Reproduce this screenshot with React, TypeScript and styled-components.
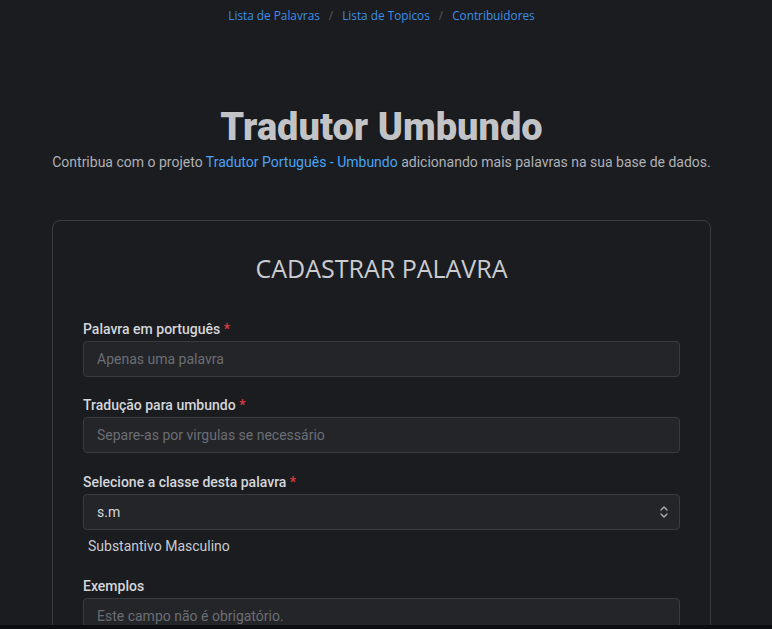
import React from "react";
import styled, { createGlobalStyle } from "styled-components";

const Global = createGlobalStyle`
  html, body { margin: 0; padding: 0; background: #0c0d10; }
  body { font-family: Roboto, "Liberation Sans", sans-serif; }
  * { box-sizing: border-box; }
`;

const Root = styled.div`
  height: 625px;
  overflow: hidden;
  background: #1b1c20;
  padding: 0 61px 0 52px;
`;

const Breadcrumb = styled.nav`
  display: flex;
  justify-content: center;
  align-items: center;
  gap: 9px;
  padding-top: 6px;
  height: 24px;
  font-family: "Open Sans", "Noto Sans", sans-serif;
  font-size: 11.8px;
`;

const Crumb = styled.a`
  color: #3d8fe6;
  text-decoration: none;
`;

const Sep = styled.span`
  color: #55585e;
`;

const Header = styled.header`
  display: flex;
  flex-direction: column;
  align-items: center;
  padding-top: 81px;
`;

const Title = styled.h1`
  margin: 0;
  font-family: Roboto, sans-serif;
  font-weight: 900;
  font-size: 38px;
  line-height: 44px;
  color: #c2c3c6;
  text-shadow: 0 0 1px #000;
`;

const Subtitle = styled.p`
  margin: 3px 0 0;
  font-size: 14px;
  line-height: 20px;
  white-space: nowrap;
  color: #aeb1b6;
`;

const Link = styled.a`
  color: #4aa3f5;
  text-decoration: none;
`;

const Card = styled.section`
  margin-top: 48px;
  border: 1px solid #3b3c41;
  border-radius: 8px;
  padding: 26px 30px 30px;
`;

const CardTitle = styled.h2`
  margin: 0 0 30px;
  text-align: center;
  font-family: "Open Sans", "Noto Sans", sans-serif;
  font-weight: 500;
  font-size: 25px;
  line-height: 42px;
  color: #c9ccd1;
`;

const Field = styled.div<{ $gap?: number }>`
  display: flex;
  flex-direction: column;
  margin-bottom: ${(p) => p.$gap ?? 18}px;
`;

const Label = styled.label`
  font-size: 14px;
  font-weight: 500;
  line-height: 20px;
  color: #d3d6da;
  margin-bottom: 2px;
`;

const Req = styled.span`
  color: #e03a3e;
`;

const Input = styled.input`
  height: 36px;
  width: 100%;
  padding: 0 13px;
  background: #242529;
  border: 1px solid #3a3b40;
  border-radius: 4px;
  font-family: Roboto, sans-serif;
  font-size: 14px;
  color: #d3d6da;
  outline: none;
  &::placeholder { color: #6b6e74; }
`;

const SelectBox = styled.div`
  position: relative;
  height: 36px;
  display: flex;
  align-items: center;
  padding: 0 13px;
  background: #242529;
  border: 1px solid #3a3b40;
  border-radius: 4px;
  font-size: 14px;
  color: #d3d6da;
`;

const Chevrons = styled.svg`
  position: absolute;
  right: 10px;
  top: 50%;
  transform: translateY(-50%);
`;

const Hint = styled.div`
  margin-top: 7px;
  padding-left: 5px;
  font-size: 14px;
  line-height: 18px;
  color: #c7cacf;
`;

export default function App() {
  return (
    <>
      <Global />
      <Root>
        <Breadcrumb>
          <Crumb href="#">Lista de Palavras</Crumb>
          <Sep>/</Sep>
          <Crumb href="#">Lista de Topicos</Crumb>
          <Sep>/</Sep>
          <Crumb href="#">Contribuidores</Crumb>
        </Breadcrumb>
        <Header>
          <Title>Tradutor Umbundo</Title>
          <Subtitle>
            Contribua com o projeto <Link href="#">Tradutor Português - Umbundo</Link> adicionando mais palavras na sua base de dados.
          </Subtitle>
        </Header>
        <Card>
          <CardTitle>CADASTRAR PALAVRA</CardTitle>
          <Field>
            <Label>Palavra em português <Req>*</Req></Label>
            <Input placeholder="Apenas uma palavra" />
          </Field>
          <Field $gap={19}>
            <Label>Tradução para umbundo <Req>*</Req></Label>
            <Input placeholder="Separe-as por virgulas se necessário" />
          </Field>
          <Field $gap={21}>
            <Label>Selecione a classe desta palavra <Req>*</Req></Label>
            <SelectBox>
              s.m
              <Chevrons width="10" height="14" viewBox="0 0 10 14" fill="none" stroke="#b0b3b8" strokeWidth="1.3" strokeLinecap="round" strokeLinejoin="round">
                <path d="M2 5 L5 2 L8 5" />
                <path d="M2 9 L5 12 L8 9" />
              </Chevrons>
            </SelectBox>
            <Hint>Substantivo Masculino</Hint>
          </Field>
          <Field>
            <Label>Exemplos</Label>
            <Input placeholder="Este campo não é obrigatório." />
          </Field>
        </Card>
      </Root>
    </>
  );
}
